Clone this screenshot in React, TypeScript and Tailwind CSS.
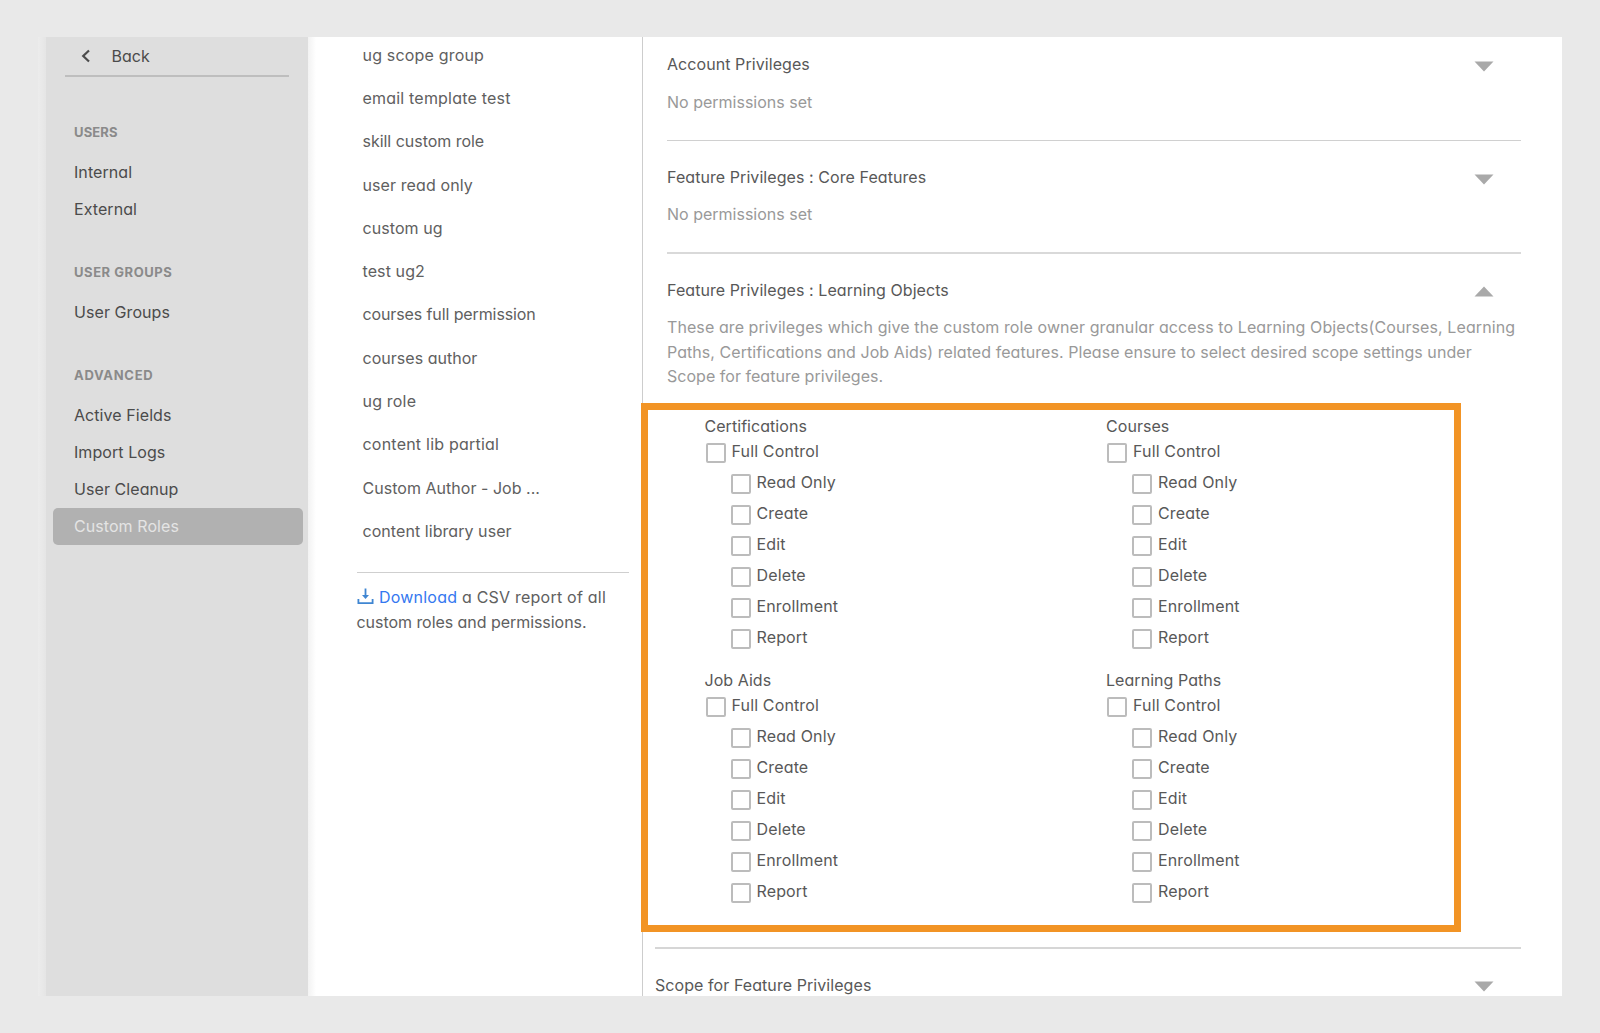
import React from "react";

const roles = [
  { name: "ug scope group", track: "tracking-[0.18px]" },
  { name: "email template test", track: "tracking-[0.2px]" },
  { name: "skill custom role", track: "tracking-[-0.03px]" },
  { name: "user read only", track: "tracking-[0.1px]" },
  { name: "custom ug", track: "tracking-[0.08px]" },
  { name: "test ug2", track: "tracking-[0.1px]" },
  { name: "courses full permission", track: "tracking-[-0.11px]" },
  { name: "courses author", track: "tracking-[0.03px]" },
  { name: "ug role", track: "tracking-[0.2px]" },
  { name: "content lib partial", track: "tracking-[0.22px]" },
  { name: "Custom Author - Job ...", track: "tracking-[0.03px]" },
  { name: "content library user", track: "tracking-[0.06px]" },
];

const permissions = ["Read Only", "Create", "Edit", "Delete", "Enrollment", "Report"];

function NavHeading({ children, className }: { children: React.ReactNode; className: string }) {
  return <h2 className={`pl-[21px] text-[13px] font-bold leading-5 text-[#8a8a8a] ${className}`}>{children}</h2>;
}

function NavItem({ children, active = false }: { children: React.ReactNode; active?: boolean }) {
  return (
    <a
      className={`flex h-[37.2px] items-center rounded-[5px] pl-[21px] tracking-[0.07px] ${
        active ? "bg-[#b1b1b1] pb-[1px] text-[#e4e4e4]" : "text-[#4b4b4b]"
      }`}
    >
      {children}
    </a>
  );
}

function Caret({ up = false }: { up?: boolean }) {
  return (
    <svg width="20" height="11" viewBox="0 0 20 11" className="mr-[27px] mt-[3px] shrink-0" fill="#a9a9a9">
      <path d={up ? "M0.5 10.5 L10 0.5 L19.5 10.5 Z" : "M0.5 0.5 L19.5 0.5 L10 10.5 Z"} />
    </svg>
  );
}

function SectionHeader({ title, up }: { title: string; up?: boolean }) {
  return (
    <div className="flex h-[25px] items-center justify-between text-[#585858]">
      <h3 className="tracking-[0.07px]">{title}</h3>
      <Caret up={up} />
    </div>
  );
}

function Check({ label }: { label: string }) {
  return (
    <label className="flex h-[31px] items-start">
      <span className="mt-[4.4px] size-5 shrink-0 rounded-[2px] border-2 border-[#bcbcbc] bg-white" />
      <span className="ml-[6px] leading-[25px] tracking-[0.14px]">{label}</span>
    </label>
  );
}

function PermissionGroup({ title }: { title: string }) {
  return (
    <div className="h-[254px] text-[#585858]">
      <h4 className="leading-[25px] tracking-[0.05px]">{title}</h4>
      <div className="pl-[1px]">
        <Check label="Full Control" />
        <div className="pl-[25px]">
          {permissions.map((p) => (
            <Check key={p} label={p} />
          ))}
        </div>
      </div>
    </div>
  );
}

export default function App() {
  return (
    <div className="h-[1033px] w-[1600px] overflow-hidden bg-[#e9e9e9] pl-[38px] pt-[37px] font-['Inter','Liberation_Sans',sans-serif] text-[16px] leading-[24.8px] [font-feature-settings:'cv11'_1]">
      <div className="flex h-[958.5px] w-[1524px] overflow-hidden bg-white">
        <div className="w-2 shrink-0 bg-linear-to-r from-[#ececec] to-[#e5e5e5]" />

        <nav className="w-[262px] shrink-0 bg-[#dedede] pl-[7px] pr-[5px]">
          <div className="ml-[12px] mr-[14px] flex h-[39.5px] items-center border-b-2 border-[#bebebe] pt-[1px] text-[#4b4b4b]">
            <svg width="10" height="14" viewBox="0 0 10 14" className="ml-4 shrink-0" fill="none" stroke="#4b4b4b" strokeWidth="2.2">
              <path d="M8 1.5 L2.2 7 L8 12.5" />
            </svg>
            <span className="ml-[20.5px]">Back</span>
          </div>
          <NavHeading className="mt-[45.5px] mb-[12px] tracking-[0.15px]">USERS</NavHeading>
          <NavItem>Internal</NavItem>
          <NavItem>External</NavItem>
          <NavHeading className="mt-[33.9px] mb-[11.5px] tracking-[0.55px]">USER GROUPS</NavHeading>
          <NavItem>User Groups</NavItem>
          <NavHeading className="mt-[33.9px] mb-[11.8px] tracking-[0.7px]">ADVANCED</NavHeading>
          <NavItem>Active Fields</NavItem>
          <NavItem>Import Logs</NavItem>
          <NavItem>User Cleanup</NavItem>
          <NavItem active>Custom Roles</NavItem>
        </nav>

        <div className="flex w-[334px] shrink-0">
          <div className="w-2 shrink-0 bg-linear-to-r from-[#f2f2f2] to-white" />
          <div className="ml-[40.5px] w-[272.5px] text-[#606060]">
            <ul className="-mt-[3.6px] pl-[6px]">
              {roles.map((r) => (
                <li key={r.name} className={`flex h-[43.3px] items-center whitespace-nowrap ${r.track}`}>
                  {r.name}
                </li>
              ))}
            </ul>
            <div className="mt-[18.6px] border-t-[1.5px] border-[#cfcfcf] pt-[12.4px]">
              <p className="whitespace-nowrap">
                <svg width="17" height="17" viewBox="0 0 17 17" className="mr-[5.5px] inline-block align-[-2px]" fill="none" stroke="#3f86d2" strokeWidth="1.8">
                  <path d="M1.4 11 V15.2 H15.6 V11" />
                  <path d="M8.5 0.5 V9" />
                  <path d="M5 7 H12 L8.5 11 Z" fill="#3f86d2" stroke="none" />
                </svg>
                <span className="tracking-[0.22px]">
                  <a className="text-[#3478f0]">Download</a> a CSV report of all
                </span>
                <br />
                <span className="tracking-[-0.05px]">custom roles and permissions.</span>
              </p>
            </div>
          </div>
        </div>

        <main className="relative w-[920px] shrink-0 border-l border-[#cdcdcd]">
          <div className="ml-[24px] w-[853.5px]">
            <section className="h-[103.5px] border-b-[1.5px] border-[#d0d0d0] pt-[15px]">
              <SectionHeader title="Account Privileges" />
              <p className="mt-[12.8px] text-[#999999]">No permissions set</p>
            </section>
            <section className="h-[113.5px] border-b-2 border-[#d9d9d9] pt-[24.5px]">
              <SectionHeader title="Feature Privileges : Core Features" />
              <p className="mt-[12px] text-[#999999]">No permissions set</p>
            </section>
            <section className="h-[693px] pt-[23.7px]">
              <SectionHeader title="Feature Privileges : Learning Objects" up />
              <p className="mt-[12.1px] whitespace-nowrap tracking-[0.085px] text-[#999999]">
                These are privileges which give the custom role owner granular access to Learning Objects(Courses, Learning
                <br />
                <span className="tracking-[0.06px]">
                  Paths, Certifications and Job Aids) related features. Please ensure to select desired scope settings under
                </span>
                <br />
                <span className="tracking-[0.03px]">Scope for feature privileges.</span>
              </p>
              <div className="ml-[37.5px] mt-[24.7px] grid grid-cols-[401.5px_1fr]">
                <PermissionGroup title="Certifications" />
                <PermissionGroup title="Courses" />
                <PermissionGroup title="Job Aids" />
                <PermissionGroup title="Learning Paths" />
              </div>
            </section>
          </div>
          <section className="ml-[12px] w-[865.5px] border-t-[2px] border-[#d6d6d6] pt-[23.5px]">
            <SectionHeader title="Scope for Feature Privileges" />
          </section>
          {/* Highlight around the learning object permissions */}
          <div className="pointer-events-none absolute -left-[2px] top-[366px] h-[529px] w-[820px] border-7 border-[#f29425]" />
        </main>
      </div>
    </div>
  );
}
